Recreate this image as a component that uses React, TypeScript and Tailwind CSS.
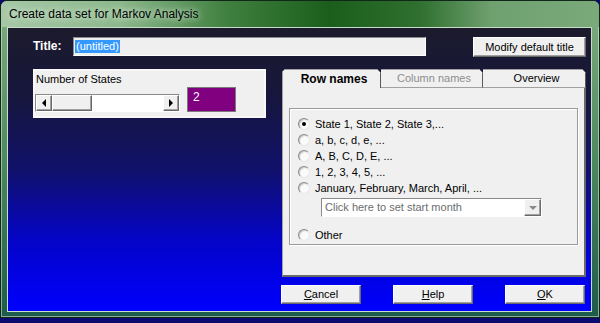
import React from "react";

const ui = "font-['Liberation_Sans',Arial,sans-serif]";
const raised =
  "bg-[#f0f0f0] border border-t-white border-l-white border-r-[#6a6a6a] border-b-[#6a6a6a] shadow-[inset_-1px_-1px_0_#a0a0a0]";
const sunken =
  "border border-t-[#8a8a8a] border-l-[#8a8a8a] border-r-white border-b-white";

function Radio({ label, checked }: { label: string; checked?: boolean }) {
  return (
    <div className="flex h-[16px] items-center">
      <div className="flex h-[12px] w-[12px] items-center justify-center rounded-full border border-t-[#8a8a8a] border-l-[#8a8a8a] border-r-[#e8e8e8] border-b-[#e8e8e8] bg-[#fafafa] shadow-[inset_1px_1px_1px_#c8c8c8]">
        {checked && <div className="h-[4px] w-[4px] rounded-full bg-black" />}
      </div>
      <span className="ml-[5px] text-[11px] leading-none text-black">{label}</span>
    </div>
  );
}

function Btn({ children, w, h = 19 }: { children: React.ReactNode; w: number; h?: number }) {
  return (
    <div
      className={`${raised} flex items-center justify-center text-[11px] text-black`}
      style={{ width: w, height: h }}
    >
      {children}
    </div>
  );
}

export default function App() {
  return (
    <div className={`${ui} relative h-[323px] w-[600px] overflow-hidden bg-[#0a0a70]`}>
      {/* window frame */}
      <div className="flex h-[318px] w-[600px] flex-col rounded-t-[7px] border border-[#13261a] bg-gradient-to-b from-[#7fae80] via-[#4d8a5e] to-[#1d5c4c] shadow-[inset_0_0_0_1px_rgba(220,240,220,0.55)]">
        {/* title bar */}
        <div className="flex h-[26px] items-center rounded-t-[6px] bg-[linear-gradient(to_right,#a6c8a6_0%,#8cb88c_20%,#3f7f3f_38%,#1b5e1b_55%,#2f6f2f_70%,#6fa06f_82%,#7aaa7a_100%)] pl-[8px]">
          <span className="text-[12px] text-black [text-shadow:0_0_6px_rgba(230,245,230,0.9),0_0_10px_rgba(230,245,230,0.6)]">
            Create data set for Markov Analysis
          </span>
        </div>

        {/* client area */}
        <div className="ml-[6px] mr-[7px] h-[285px] border border-[#c9dcc9] bg-[linear-gradient(to_bottom,#1c1b2c_0%,#16163e_25%,#10106a_50%,#0404c8_75%,#0000ff_100%)] pl-[25px] pt-[9px]">
          {/* title row */}
          <div className="flex h-[20px] items-start">
            <span className="w-[40px] text-[12px] font-bold leading-[19px] text-white">Title:</span>
            <div className={`${sunken} flex h-[19px] w-[353px] items-center bg-[#efefef] pl-[1px]`}>
              <span className="bg-[#3399ff] px-[1px] text-[11px] leading-[13px] text-white">(untitled)</span>
            </div>
            <div className="ml-[47px]">
              <Btn w={113} h={20}>
                Modify default title
              </Btn>
            </div>
          </div>

          <div className="mt-[12px] flex items-start">
            {/* number of states */}
            <div className="h-[49px] w-[233px] border-2 border-[#f8f8f8] bg-[#f0f0f0] pt-[1px]">
              <div className="pl-[1px] text-[11px] leading-[14px] text-black">Number of States</div>
              <div className="mt-[1px] flex items-end">
                <div className={`${sunken} flex h-[18px] w-[145px] bg-white`}>
                  <div className={`${raised} flex h-full w-[16px] items-center justify-center`}>
                    <div className="h-0 w-0 border-y-[4px] border-r-[4px] border-y-transparent border-r-black" />
                  </div>
                  <div className={`${raised} h-full w-[40px]`} />
                  <div className="flex-1 bg-white" />
                  <div className={`${raised} flex h-full w-[16px] items-center justify-center`}>
                    <div className="h-0 w-0 border-y-[4px] border-l-[4px] border-y-transparent border-l-black" />
                  </div>
                </div>
                <div className="ml-[7px] h-[25px] w-[49px] border border-[#7a7a7a] bg-[#800080] pl-[5px] pt-[2px] text-[12px] leading-[14px] text-white">
                  2
                </div>
              </div>
            </div>

            {/* tab control + buttons */}
            <div className="ml-[16px] flex w-[304px] flex-col">
              <div className="flex h-[19px] items-stretch">
                <div className="flex w-[99px] items-center justify-center border-l border-t border-l-[#a0a0a0] border-t-[#a0a0a0] border-r border-r-[#5a5a5a] bg-[#f0f0f0] pl-[5px] text-[12px] font-bold text-black [clip-path:polygon(3px_0,calc(100%_-_4px)_0,100%_4px,100%_100%,0_100%,0_3px)]">
                  Row names
                </div>
                <div className="flex w-[102px] items-center justify-center border-b border-r border-t border-b-[#a0a0a0] border-r-[#5a5a5a] border-t-[#a0a0a0] bg-[#f0f0f0] pl-[5px] text-[11px] text-[#8d8d8d] [clip-path:polygon(0_0,calc(100%_-_4px)_0,100%_4px,100%_100%,0_100%)]">
                  Column names
                </div>
                <div className="flex w-[103px] items-center justify-center border-b border-r border-t border-b-[#a0a0a0] border-r-[#5a5a5a] border-t-[#a0a0a0] bg-[#f0f0f0] pl-[5px] text-[11px] text-black [clip-path:polygon(0_0,calc(100%_-_4px)_0,100%_4px,100%_100%,0_100%)]">
                  Overview
                </div>
              </div>
              <div className="h-[189px] border-b-2 border-l border-r-2 border-b-[#6a6a6a] border-l-[#a0a0a0] border-r-[#6a6a6a] bg-[#f0f0f0] pl-[6px] pt-[20px]">
                <div className="h-[137px] w-[289px] border border-[#9a9a9a] pl-[8px] pt-[7px] shadow-[inset_1px_1px_0_#ffffff,1px_1px_0_#ffffff]">
                  <Radio label="State 1, State 2, State 3,..." checked />
                  <Radio label="a, b, c, d, e, ..." />
                  <Radio label="A, B, C, D, E, ..." />
                  <Radio label="1, 2, 3, 4, 5, ..." />
                  <Radio label="January, February, March, April, ..." />
                  <div className={`${sunken} ml-[23px] mt-[2px] flex h-[19px] w-[221px] items-center bg-white`}>
                    <span className="flex-1 pl-[3px] text-[11px] text-[#6d6d6d]">Click here to set start month</span>
                    <div className={`${raised} flex h-[17px] w-[17px] items-center justify-center`}>
                      <div className="h-0 w-0 border-x-[4px] border-t-[4px] border-x-transparent border-t-[#8a8a8a]" />
                    </div>
                  </div>
                  <div className="mt-[10px]">
                    <Radio label="Other" />
                  </div>
                </div>
              </div>

              <div className="-ml-[1px] mt-[8px] flex gap-[32px]">
                <Btn w={80}>
                  <span>
                    <u>C</u>ancel
                  </span>
                </Btn>
                <Btn w={80}>
                  <span>
                    <u>H</u>elp
                  </span>
                </Btn>
                <Btn w={80}>
                  <span>
                    <u>O</u>K
                  </span>
                </Btn>
              </div>
            </div>
          </div>
        </div>
      </div>
    </div>
  );
}
